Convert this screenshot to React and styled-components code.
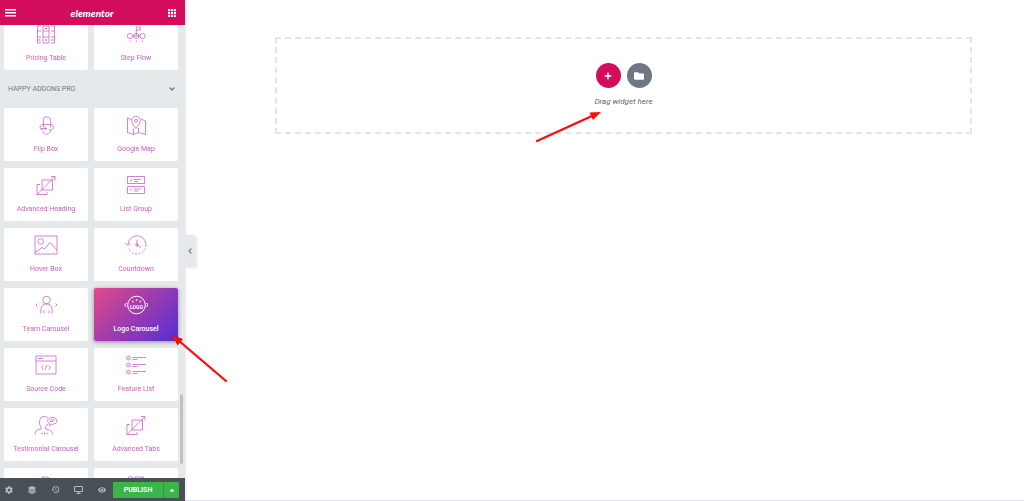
import React from 'react';
import styled, { createGlobalStyle } from 'styled-components'
import { FaCog, FaLayerGroup, FaEye, FaPlus, FaFolder, FaCaretUp } from 'react-icons/fa'
import { MdHistory } from 'react-icons/md'
import { ChevronDown, ChevronLeft } from 'lucide-react'

const icons = {
  pricing: (
    <>
      <path d="M7 2H3.500v17H7M9 2h6v17H9zM17 2h3.500v17H17M3.500 7H7M9 7h6M17 7h3.500M3.500 13H7M9 13h6M17 13h3.500" />
      <path d="M4.500 16h2M11 16h2M17.500 16h2M11 4.500h2" strokeWidth="1.200" />
    </>
  ),
  flow: (
    <>
      <circle cx="6" cy="12" r="2.600" />
      <circle cx="12.300" cy="12" r="2.600" />
      <circle cx="18.600" cy="12" r="2.600" />
      <path d="M8.600 12h7.400M12.300 12V3h4v3h-4M6 16.500v1.500M12.300 16.500v1.500M18.600 16.500v1.500" />
    </>
  ),
  flip: (
    <>
      <path d="M9.500 12V3.500L11 2h2.500c2 0 3.200 1.200 3.200 3.500v7" />
      <path d="M9 15c-4 0-4-5.500.5-5.500H16c5 0 5 5.500 0 5.500h-1" />
      <path d="M7 13.500h5.500M10.500 11.800l2 1.700-2 1.700M16.500 15c0 4-3.500 4.500-6 4M9.500 16.500v2" />
    </>
  ),
  map: (
    <>
      <path d="M7.500 4.500L3.500 3v14.500l6 2 5-2 7 2V6l-4.500-2M9.500 13.500v6M14.500 13v4.500" />
      <path d="M12 13.500C9.500 10 7.800 8.300 7.800 5.500a4.200 4.200 0 018.400 0c0 2.800-1.700 4.500-4.200 8z" />
      <circle cx="12" cy="5.800" r="1.500" />
    </>
  ),
  advanced: (
    <path d="M8 5h10.500v10H8zM6 9.500H3v10h10V17M3 19.500L21 1.500M17 1.500h4v4" />
  ),
  list: (
    <path d="M3.500 1.500h17v7h-17zM3.500 11.500h17v7h-17zM6 5l1 1 1.500-2M10 4.500h7M10 6.500h4M6 15h2M10 14h7M10 16h4" />
  ),
  image: (
    <>
      <rect x="1" y="1" width="22" height="18" />
      <circle cx="6.700" cy="6.500" r="2.800" />
      <path d="M1 17.500l7-5 2.500 1.500 5.500-6.500L23 15" />
    </>
  ),
  clock: (
    <>
      <path d="M4 9.500a9 9 0 0118 .5" />
      <path d="M22 10a9 9 0 01-17.500 3" strokeDasharray="2 1.500" />
      <path d="M1.500 8L4 10.500 6.500 8M13 4.500V10l4 2.500" />
      <circle cx="13" cy="10" r="1.200" />
    </>
  ),
  team: (
    <>
      <circle cx="12.500" cy="5" r="3.800" />
      <path d="M7 18.500c-1-7 2-9.500 5.500-9.500s6.500 2.500 5.500 9.500M10 15.500v3M15 15.500v3M3.500 8.500L2 10l1.500 1.500M21.500 8.500L23 10l-1.500 1.500" />
    </>
  ),
  logo: (
    <>
      <circle cx="12.500" cy="10" r="8.800" />
      <path d="M2.500 8L.5 10l2 2M22.500 8l1.800 2-1.800 2" />
      <path d="M8 6.500h1.500M11.800 5h1.500M15.500 6.500H17" strokeWidth="1.500" />
      <text x="12.500" y="14" textAnchor="middle">LOGO</text>
    </>
  ),
  code: (
    <path d="M2 1h20v18H2zM2 6h20M4 3.500h5M9.500 10.500L7.500 12.500l2 2M14.500 10.500l2 2-2 2M13 10l-2 5" />
  ),
  feature: (
    <>
      <circle cx="4.500" cy="3" r="1.900" />
      <circle cx="4.500" cy="10" r="1.900" />
      <circle cx="4.500" cy="17" r="1.900" />
      <path d="M4 3h1M4 10h1M4 17h1M8.500 2.500H22M8.500 4.500h5M8.500 9.500H22M8.500 11.500h5M8.500 16.500H22M8.500 18.500h5" />
    </>
  ),
  testimonial: (
    <>
      <path d="M1 19.500c0-4 2-4.500 6-5.500v-2C4.500 9 5 1.500 10 1.500c2 0 3 .5 4 1.500M13.500 9c-.5 1.500-1 2-2 3v2c4 1 7 1.500 7 5.500" />
      <path d="M18.500 2.500c6 0 6 6.500.5 6.500l-3.500 1.500v-2c-3.500-2-2-6 3-6zM16 5h5M16 6.500h3" />
      <path d="M7.500 18.500h1M10 18.500h1M12.500 18.500h1" strokeWidth="1.300" />
    </>
  ),
  page: <path d="M8 19V2h6l2 2.500V19" />,
  chat: (
    <>
      <circle cx="6.500" cy="4" r="2.500" />
      <path d="M11 8V2h8.500v6zM2 12c1-5 7-5 8 0" />
    </>
  ),
}

const topWidgets = [
  { label: 'Pricing Table', icon: 'pricing' },
  { label: 'Step Flow', icon: 'flow' },
]

const proWidgets = [
  { label: 'Flip Box', icon: 'flip' },
  { label: 'Google Map', icon: 'map' },
  { label: 'Advanced Heading', icon: 'advanced' },
  { label: 'List Group', icon: 'list' },
  { label: 'Hover Box', icon: 'image' },
  { label: 'Countdown', icon: 'clock' },
  { label: 'Team Carousel', icon: 'team' },
  { label: 'Logo Carousel', icon: 'logo', active: true },
  { label: 'Source Code', icon: 'code' },
  { label: 'Feature List', icon: 'feature' },
  { label: 'Testimonial Carousel', icon: 'testimonial' },
  { label: 'Advanced Tabs', icon: 'advanced' },
  { icon: 'page' },
  { icon: 'chat' },
]

const WidgetGrid=({ items }) => (
  <Grid>
    {items.map((item, i) => (
      <Widget key={i} $active={item.active}>
        <WidgetIcon viewBox="0 0 24 20" $active={item.active}>{icons[item.icon]}</WidgetIcon>
        {item.label && <WidgetLabel $active={item.active}>{item.label}</WidgetLabel>}
      </Widget>
    ))}
  </Grid>
)

const App=() => {
  return (
    <Container>
      <GlobalStyle />
      <Panel>
        <Header>
          <IconButton aria-label="Menu">
            <svg width="11" height="8" fill="#fff">
              <path d="M0 0h11v1.600H0zM0 3h11v1.600H0zM0 6h11v1.600H0z" />
            </svg>
          </IconButton>
          <Brand>elementor</Brand>
          <IconButton aria-label="Widgets">
            <svg width="8" height="8" fill="#fff">
              <path d="M0 0h2.200v2.200H0zM3 0h2.200v2.200H3zM6 0h2v2.200H6zM0 3h2.200v2.200H0zM3 3h2.200v2.200H3zM6 3h2v2.200H6zM0 6h2.200v2H0zM3 6h2.200v2H3zM6 6h2v2H6z" />
            </svg>
          </IconButton>
        </Header>
        <PanelBody>
          <Scrolled>
            <WidgetGrid items={topWidgets} />
            <Category>
              HAPPY ADDONS PRO
              <ChevronDown size={8} strokeWidth={4} />
            </Category>
            <WidgetGrid items={proWidgets} />
          </Scrolled>
          <Scrollbar />
        </PanelBody>
        <Footer>
          <Tools>
            <IconButton aria-label="Settings"><FaCog size={8} /></IconButton>
            <IconButton aria-label="Navigator"><FaLayerGroup size={8} /></IconButton>
            <IconButton aria-label="History"><MdHistory size={9} /></IconButton>
            <IconButton aria-label="Responsive mode">
              <svg width="9" height="8" fill="none" stroke="currentColor">
                <path d="M.5.500h8v5h-8zM2.500 7.500h4M4.500 5.500v2" />
              </svg>
            </IconButton>
            <IconButton aria-label="Preview"><FaEye size={8} /></IconButton>
          </Tools>
          <Publish>PUBLISH</Publish>
          <PublishMore aria-label="Save options"><FaCaretUp size={8} /></PublishMore>
        </Footer>
        <Toggle aria-label="Hide panel"><ChevronLeft size={8} strokeWidth={4} /></Toggle>
        <WidgetArrow width="60" height="52">
          <path d="M8 8L56 49" stroke="#ff0a0a" strokeWidth="2.300" strokeLinecap="round" />
          <path d="M2 3l11 4-5.500 6.500z" fill="#ff0a0a" />
        </WidgetArrow>
      </Panel>
      <Canvas>
        <DropZone>
          <Actions>
            <Round $color="#d30c5c" aria-label="Add section"><FaPlus size={8} /></Round>
            <Round $color="#6d7882" aria-label="Add template"><FaFolder size={10} /></Round>
          </Actions>
          <Hint>Drag widget here</Hint>
          <DropArrow width="68" height="34">
            <path d="M3 31L58 6" stroke="#ff0a0a" strokeWidth="2.300" strokeLinecap="round" />
            <path d="M67 2L59 10 55.500 2.500z" fill="#ff0a0a" />
          </DropArrow>
        </DropZone>
      </Canvas>
    </Container>
  )
};

const GlobalStyle=createGlobalStyle`
  *{
    box-sizing:border-box;
  }
  body{
    margin:0;
    font-family:Roboto, "Liberation Sans", sans-serif;
    background:#fff;
  }
  button{
    font-family:inherit;
    border:0;
    padding:0;
    cursor:pointer;
  }
`;

const Container=styled.div`
  display:flex;
  height:100vh;
  overflow:hidden;
`;

const Panel=styled.aside`
  position:relative;
  z-index:1;
  display:flex;
  flex-direction:column;
  flex:none;
  width:185px;
  background:#e6e9ec;
  box-shadow:0 0 3px rgba(0,0,0,0.15);
`;

const Header=styled.header`
  display:flex;
  justify-content:space-between;
  align-items:center;
  flex:none;
  height:25px;
  padding:0 9px 0 5px;
  background:#d30c5c;
`;

const IconButton=styled.button`
  display:flex;
  align-items:center;
  background:none;
  color:#b4bcc3;
`;

const Brand=styled.span`
  color:#fff;
  font-family:Lato, sans-serif;
  font-size:10px;
  font-style:italic;
  font-weight:900;
  line-height:12px;
`;

const PanelBody=styled.div`
  position:relative;
  flex:1;
  min-height:0;
  overflow:hidden;
`;

const Scrolled=styled.div`
  margin-top:-8px;
`;

const Grid=styled.div`
  display:grid;
  grid-template-columns:1fr 1fr;
  gap:7px 6px;
  padding:0 7px 0 4px;
`;

const Widget=styled.button`
  display:flex;
  flex-direction:column;
  align-items:center;
  height:53px;
  padding-top:7px;
  border-radius:2px;
  background:${props => props.$active ? 'linear-gradient(135deg, #e2498a, #562dd4)' : '#fff'};
  box-shadow:${props => props.$active ? '0 1px 4px rgba(0,0,0,0.4)' : 'none'};
`;

const WidgetIcon=styled.svg`
  width:24px;
  height:20px;
  fill:none;
  stroke:${props => props.$active ? '#fff' : '#c050bc'};
  stroke-width:${props => props.$active ? 1 : 0.7};
  text{
    fill:#fff;
    stroke:none;
    font-size:5px;
    font-weight:700;
  }
`;

const WidgetLabel=styled.span`
  width:100%;
  margin-top:9px;
  font-size:7px;
  line-height:10px;
  text-align:center;
  font-weight:${props => props.$active ? 500 : 400};
  color:${props => props.$active ? '#fff' : 'transparent'};
  background:${props => props.$active ? 'none' : 'linear-gradient(90deg, #ee5c98, #a04ed2)'};
  background-clip:text;
  -webkit-background-clip:text;
`;

const Category=styled.div`
  display:flex;
  justify-content:space-between;
  align-items:center;
  height:38px;
  padding:0 9px 0 8px;
  color:#6d7882;
  font-size:7px;
`;

const Scrollbar=styled.div`
  position:absolute;
  right:2px;
  bottom:14px;
  width:3px;
  height:70px;
  border-radius:2px;
  background:#bfc2c5;
`;

const Footer=styled.footer`
  display:flex;
  align-items:center;
  flex:none;
  height:23px;
  padding-right:6px;
  background:#495157;
`;

const Tools=styled.div`
  display:flex;
  flex:1;
  justify-content:space-between;
  align-items:center;
  padding:0 7px 0 5px;
`;

const Publish=styled.button`
  width:50px;
  height:16px;
  border-radius:1px 0 0 1px;
  background:#39b54a;
  color:#fff;
  font-size:7px;
  font-weight:700;
`;

const PublishMore=styled.button`
  display:flex;
  justify-content:center;
  align-items:center;
  width:16px;
  height:16px;
  border-left:1px solid #2f9a3e;
  border-radius:0 1px 1px 0;
  background:#39b54a;
  color:#fff;
`;

const Toggle=styled.button`
  position:absolute;
  left:100%;
  top:235px;
  display:flex;
  justify-content:center;
  align-items:center;
  width:10px;
  height:32px;
  border-radius:0 2px 2px 0;
  background:#e6e9ec;
  color:#7b858d;
  box-shadow:2px 1px 3px rgba(0,0,0,0.1);
`;

const WidgetArrow=styled.svg`
  position:absolute;
  left:170px;
  top:332px;
  fill:none;
  pointer-events:none;
`;

const Canvas=styled.main`
  flex:1;
  min-width:0;
  padding:37px 52px 0 90px;
  border-bottom:1px solid #e4dff6;
`;

const DropZone=styled.section`
  position:relative;
  display:flex;
  flex-direction:column;
  align-items:center;
  padding:24px 0;
  border:2px dashed #e3e5e7;
`;

const Actions=styled.div`
  display:flex;
  gap:6px;
`;

const Round=styled.button`
  display:flex;
  justify-content:center;
  align-items:center;
  width:25px;
  height:25px;
  border-radius:50%;
  background:${props => props.$color};
  color:#fff;
`;

const Hint=styled.p`
  margin:8px 0 0;
  color:#5f666c;
  font-size:8px;
  font-style:italic;
  line-height:12px;
`;

const DropArrow=styled.svg`
  position:absolute;
  right:50%;
  top:71px;
  margin-right:22px;
  fill:none;
  pointer-events:none;
`;

export default App
